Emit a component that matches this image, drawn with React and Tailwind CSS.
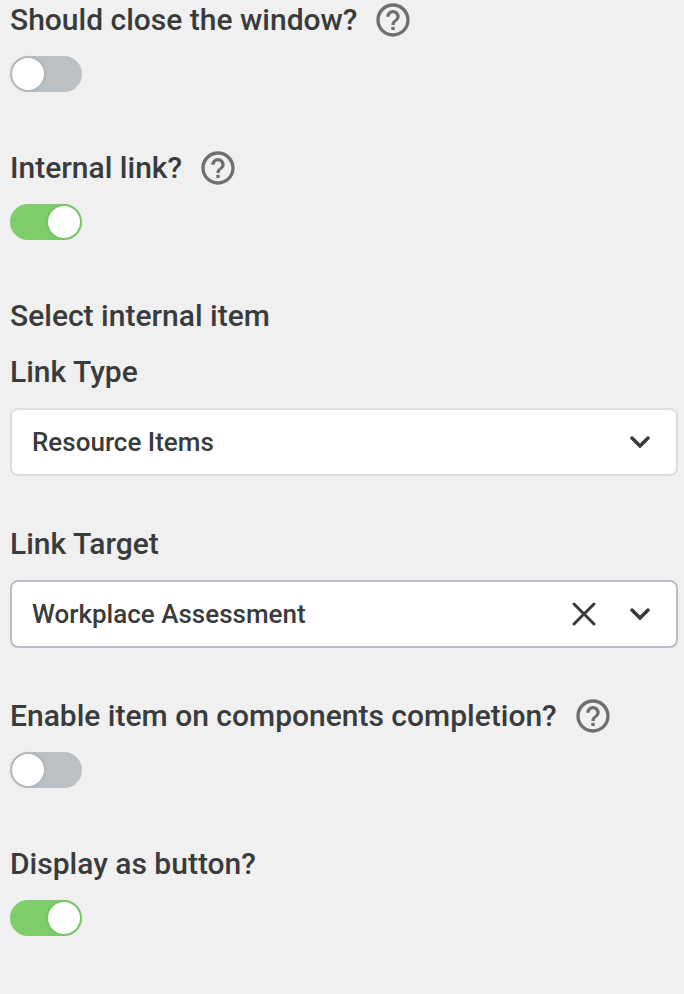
import { useState } from "react";

const HelpIcon = () => (
  <svg viewBox="0 0 24 24" className="h-10 w-10" fill="#6d6f73">
    <path d="M11 18h2v-2h-2v2zm1-16C6.480 2 2 6.480 2 12s4.480 10 10 10 10-4.480 10-10S17.520 2 12 2zm0 18c-4.410 0-8-3.590-8-8s3.590-8 8-8 8 3.590 8 8-3.590 8-8 8zm0-14c-2.210 0-4 1.790-4 4h2c0-1.100.9-2 2-2s2 .9 2 2c0 2-3 1.750-3 5h2c0-2.250 3-2.500 3-5 0-2.210-1.790-4-4-4z" />
  </svg>
);

const ChevronIcon = () => (
  <svg viewBox="0 0 20 12" className="h-3 w-5" fill="none" stroke="#38393c" strokeWidth="3.500" strokeLinecap="round">
    <path d="M2 2l8 8 8-8" />
  </svg>
);

const ToggleField = ({ id, label, help, defaultChecked }) => {
  const [checked, setChecked] = useState(defaultChecked);

  return (
    <div className="h-37">
      <div className="flex h-10 items-center gap-4">
        <label htmlFor={id}>{label}</label>
        {help && (
          <button type="button" aria-label={`Help: ${label}`}>
            <HelpIcon />
          </button>
        )}
      </div>
      <input
        id={id}
        type="checkbox"
        role="switch"
        checked={checked}
        onChange={(e) => setChecked(e.target.checked)}
        className="mt-4 block h-9 w-18 cursor-pointer appearance-none rounded-full border-2 border-[#bbc0c4] bg-[#bbc0c4] before:block before:h-8 before:w-8 before:rounded-full before:bg-white before:shadow-[0_0_4px_rgba(0,0,0,0.15)] checked:border-[#7dce6b] checked:bg-[#7dce6b] checked:before:ml-9"
      />
    </div>
  );
};

const App = () => {
  const [linkType, setLinkType] = useState("Resource Items");
  const [target, setTarget] = useState("Workplace Assessment");

  return (
    <div className="min-h-screen bg-[#f0f0f0] pr-1.5 pl-2.5 font-['Roboto',sans-serif] text-[30px] leading-10 font-medium text-[#3a3b3d]">
      <ToggleField id="close-window" label="Should close the window?" help defaultChecked={false} />
      <ToggleField id="internal-link" label="Internal link?" help defaultChecked />

      <h2 className="h-14">Select internal item</h2>

      <div className="h-43">
        <label htmlFor="link-type">Link Type</label>
        <div className="mt-4 grid items-center">
          <select
            id="link-type"
            value={linkType}
            onChange={(e) => setLinkType(e.target.value)}
            className="col-start-1 row-start-1 h-17 w-full appearance-none rounded-lg border-2 border-[#dcdce1] bg-white px-5 text-[26px]"
          >
            <option>Resource Items</option>
          </select>
          <span className="pointer-events-none col-start-1 row-start-1 mr-7 justify-self-end">
            <ChevronIcon />
          </span>
        </div>
      </div>

      <div className="h-43">
        <label htmlFor="link-target">Link Target</label>
        <div className="mt-4 grid items-center">
          <select
            id="link-target"
            value={target}
            onChange={(e) => setTarget(e.target.value)}
            className="col-start-1 row-start-1 h-17 w-full appearance-none rounded-lg border-2 border-[#bbbcc8] bg-white px-5 text-[26px]"
          >
            <option value=""></option>
            <option>Workplace Assessment</option>
          </select>
          <div className="pointer-events-none col-start-1 row-start-1 mr-7 flex items-center gap-8 justify-self-end">
            <button
              type="button"
              aria-label="Clear link target"
              onClick={() => setTarget("")}
              className="pointer-events-auto"
            >
              <svg viewBox="0 0 28 28" className="h-7 w-7" fill="none" stroke="#38393c" strokeWidth="3" strokeLinecap="round">
                <path d="M4 4l20 20M24 4L4 24" />
              </svg>
            </button>
            <ChevronIcon />
          </div>
        </div>
      </div>

      <ToggleField id="enable-completion" label="Enable item on components completion?" help defaultChecked={false} />
      <ToggleField id="display-button" label="Display as button?" defaultChecked />
    </div>
  );
};

export default App;
